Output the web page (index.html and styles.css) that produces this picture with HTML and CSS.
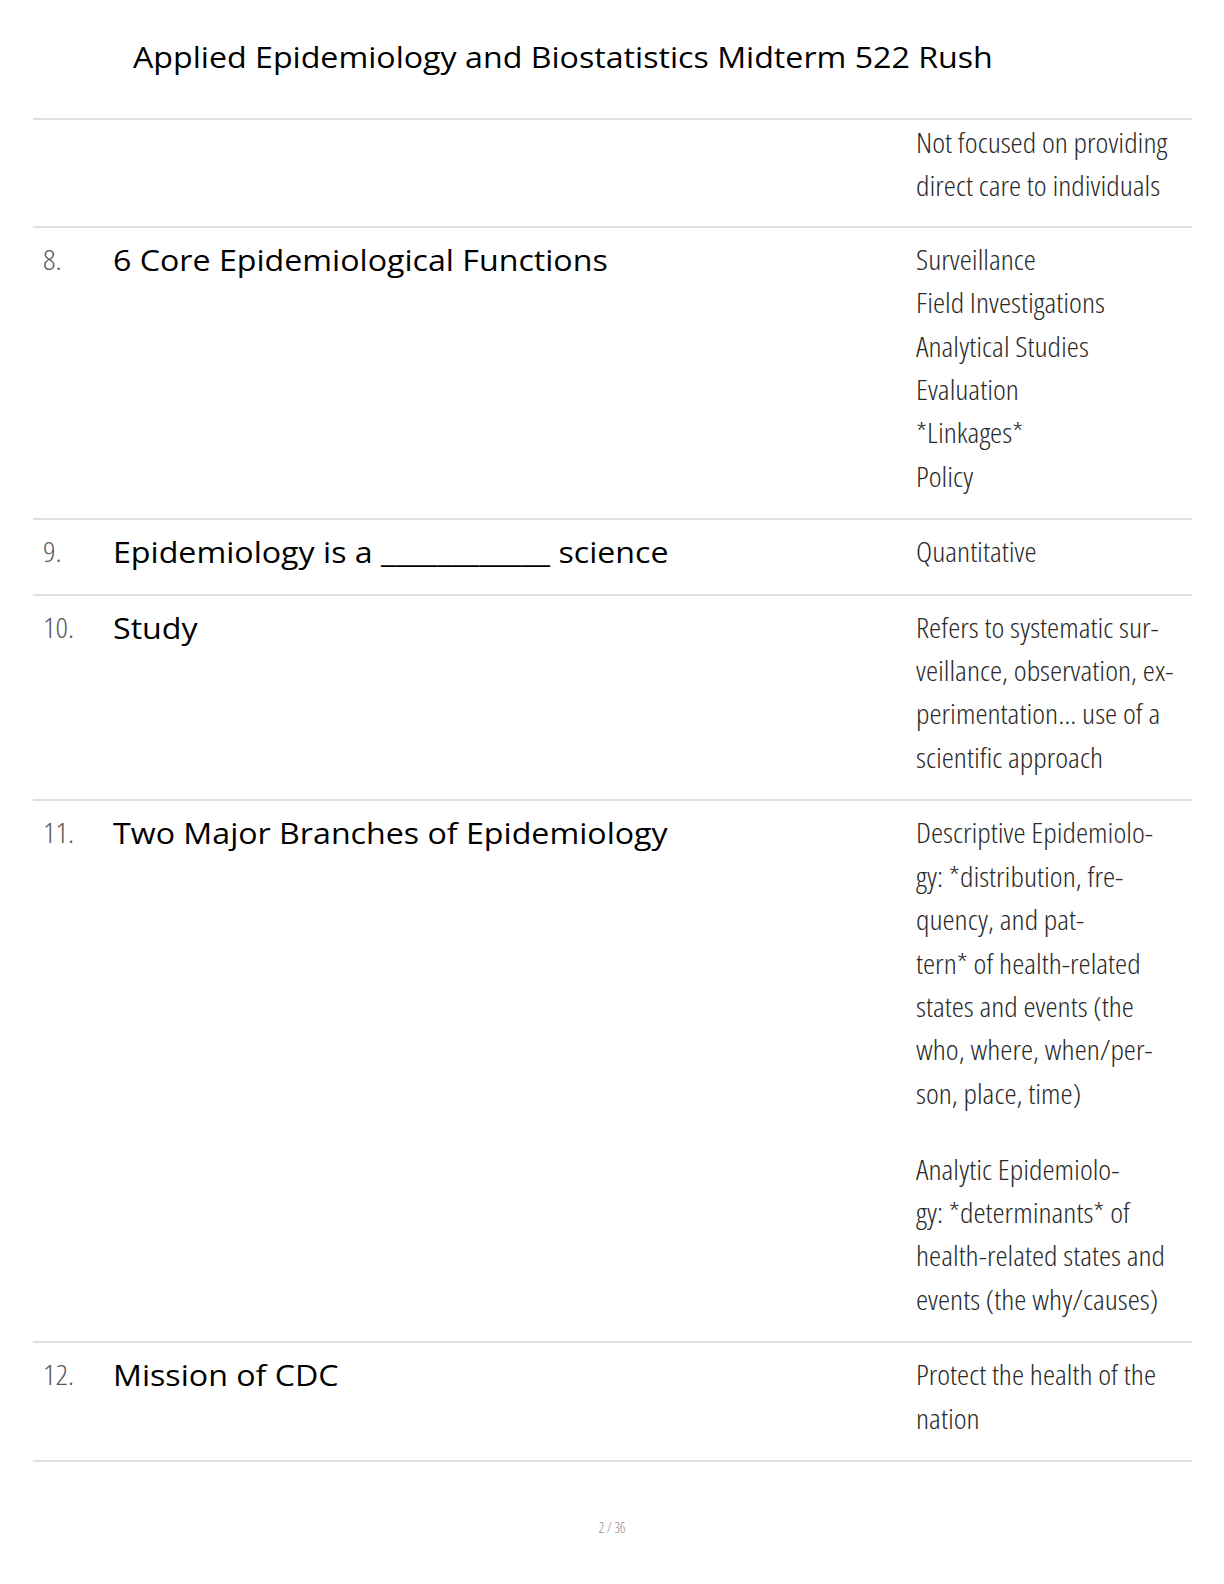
FILE: index.html
```html
<!DOCTYPE html>
<html lang="en">
<head>
<meta charset="utf-8">
<title>Applied Epidemiology and Biostatistics Midterm 522 Rush</title>
<link rel="stylesheet" href="styles.css">
</head>
<body>
<header class="page-header">
  <h1 class="title"><span class="wide">Applied Epidemiology and Biostatistics Midterm 522 Rush</span></h1>
</header>
<main class="cards">
  <div class="row row-cont">
    <div class="num"></div>
    <div class="term"></div>
    <div class="def">
      <span class="ln">Not focused on providing</span>
      <span class="ln">direct care to individuals</span>
    </div>
  </div>
  <div class="row">
    <div class="num"><span class="ln">8.</span></div>
    <div class="term"><span class="wide">6 Core Epidemiological Functions</span></div>
    <div class="def">
      <span class="ln">Surveillance</span>
      <span class="ln">Field Investigations</span>
      <span class="ln">Analytical Studies</span>
      <span class="ln">Evaluation</span>
      <span class="ln">*Linkages*</span>
      <span class="ln">Policy</span>
    </div>
  </div>
  <div class="row">
    <div class="num"><span class="ln">9.</span></div>
    <div class="term"><span class="wide">Epidemiology is a ____________ science</span></div>
    <div class="def">
      <span class="ln">Quantitative</span>
    </div>
  </div>
  <div class="row">
    <div class="num"><span class="ln">10.</span></div>
    <div class="term"><span class="wide">Study</span></div>
    <div class="def">
      <span class="ln">Refers to systematic sur-</span>
      <span class="ln">veillance, observation, ex-</span>
      <span class="ln">perimentation... use of a</span>
      <span class="ln">scientific approach</span>
    </div>
  </div>
  <div class="row">
    <div class="num"><span class="ln">11.</span></div>
    <div class="term"><span class="wide">Two Major Branches of Epidemiology</span></div>
    <div class="def">
      <p class="para">
        <span class="ln">Descriptive Epidemiolo-</span>
        <span class="ln">gy: *distribution, fre-</span>
        <span class="ln">quency, and pat-</span>
        <span class="ln">tern* of health-related</span>
        <span class="ln">states and events (the</span>
        <span class="ln">who, where, when/per-</span>
        <span class="ln">son, place, time)</span>
      </p>
      <p class="para">
        <span class="ln">Analytic Epidemiolo-</span>
        <span class="ln">gy: *determinants* of</span>
        <span class="ln">health-related states and</span>
        <span class="ln">events (the why/causes)</span>
      </p>
    </div>
  </div>
  <div class="row row-last">
    <div class="num"><span class="ln">12.</span></div>
    <div class="term"><span class="wide">Mission of CDC</span></div>
    <div class="def">
      <span class="ln">Protect the health of the</span>
      <span class="ln">nation</span>
    </div>
  </div>
</main>
<footer class="page-footer">2 / 36</footer>
</body>
</html>
```
FILE: styles.css
```css
html, body {
  margin: 0;
  padding: 0;
  background: #ffffff;
}

body {
  font-family: "Open Sans", "Liberation Sans", sans-serif;
  color: #000;
}

.page-header {
  padding: 37px 0 41px 133px;
}

.title {
  margin: 0;
  font-size: 30px;
  font-weight: 400;
  line-height: 40px;
  color: #000;
}

.wide {
  display: inline-block;
  white-space: nowrap;
  transform: scaleX(1.072);
  transform-origin: left center;
}

.cards {
  margin: 0 32px 0 33px;
}

.row {
  display: grid;
  grid-template-columns: 70px 1fr 276px;
  border-top: 2px solid #dedee3;
  padding: 10px 0 20px 10px;
}

.row-cont {
  padding-top: 1px;
  padding-bottom: 18px;
}

.row-last {
  border-bottom: 2px solid #dedee3;
}

.num {
  font-family: "Open Sans", "Liberation Sans", sans-serif;
  font-weight: 300;
  font-stretch: 75%;
  font-size: 27px;
  line-height: 43.4px;
  color: #5a5a5a;
}

.term {
  font-size: 30px;
  line-height: 43.4px;
  color: #000;
}

.def {
  font-family: "Open Sans", "Liberation Sans", sans-serif;
  font-weight: 300;
  font-stretch: 75%;
  font-size: 27px;
  line-height: 43.4px;
  color: #2a2a2a;
}

.ln {
  display: block;
  white-space: nowrap;
  transform: scaleX(1.137);
  transform-origin: left center;
}

.para {
  margin: 0;
}

.para + .para {
  margin-top: 32.5px;
}

.page-footer {
  margin-top: 56px;
  text-align: center;
  font-weight: 300;
  font-stretch: 75%;
  font-size: 14px;
  line-height: 20px;
  color: #888;
}
```
